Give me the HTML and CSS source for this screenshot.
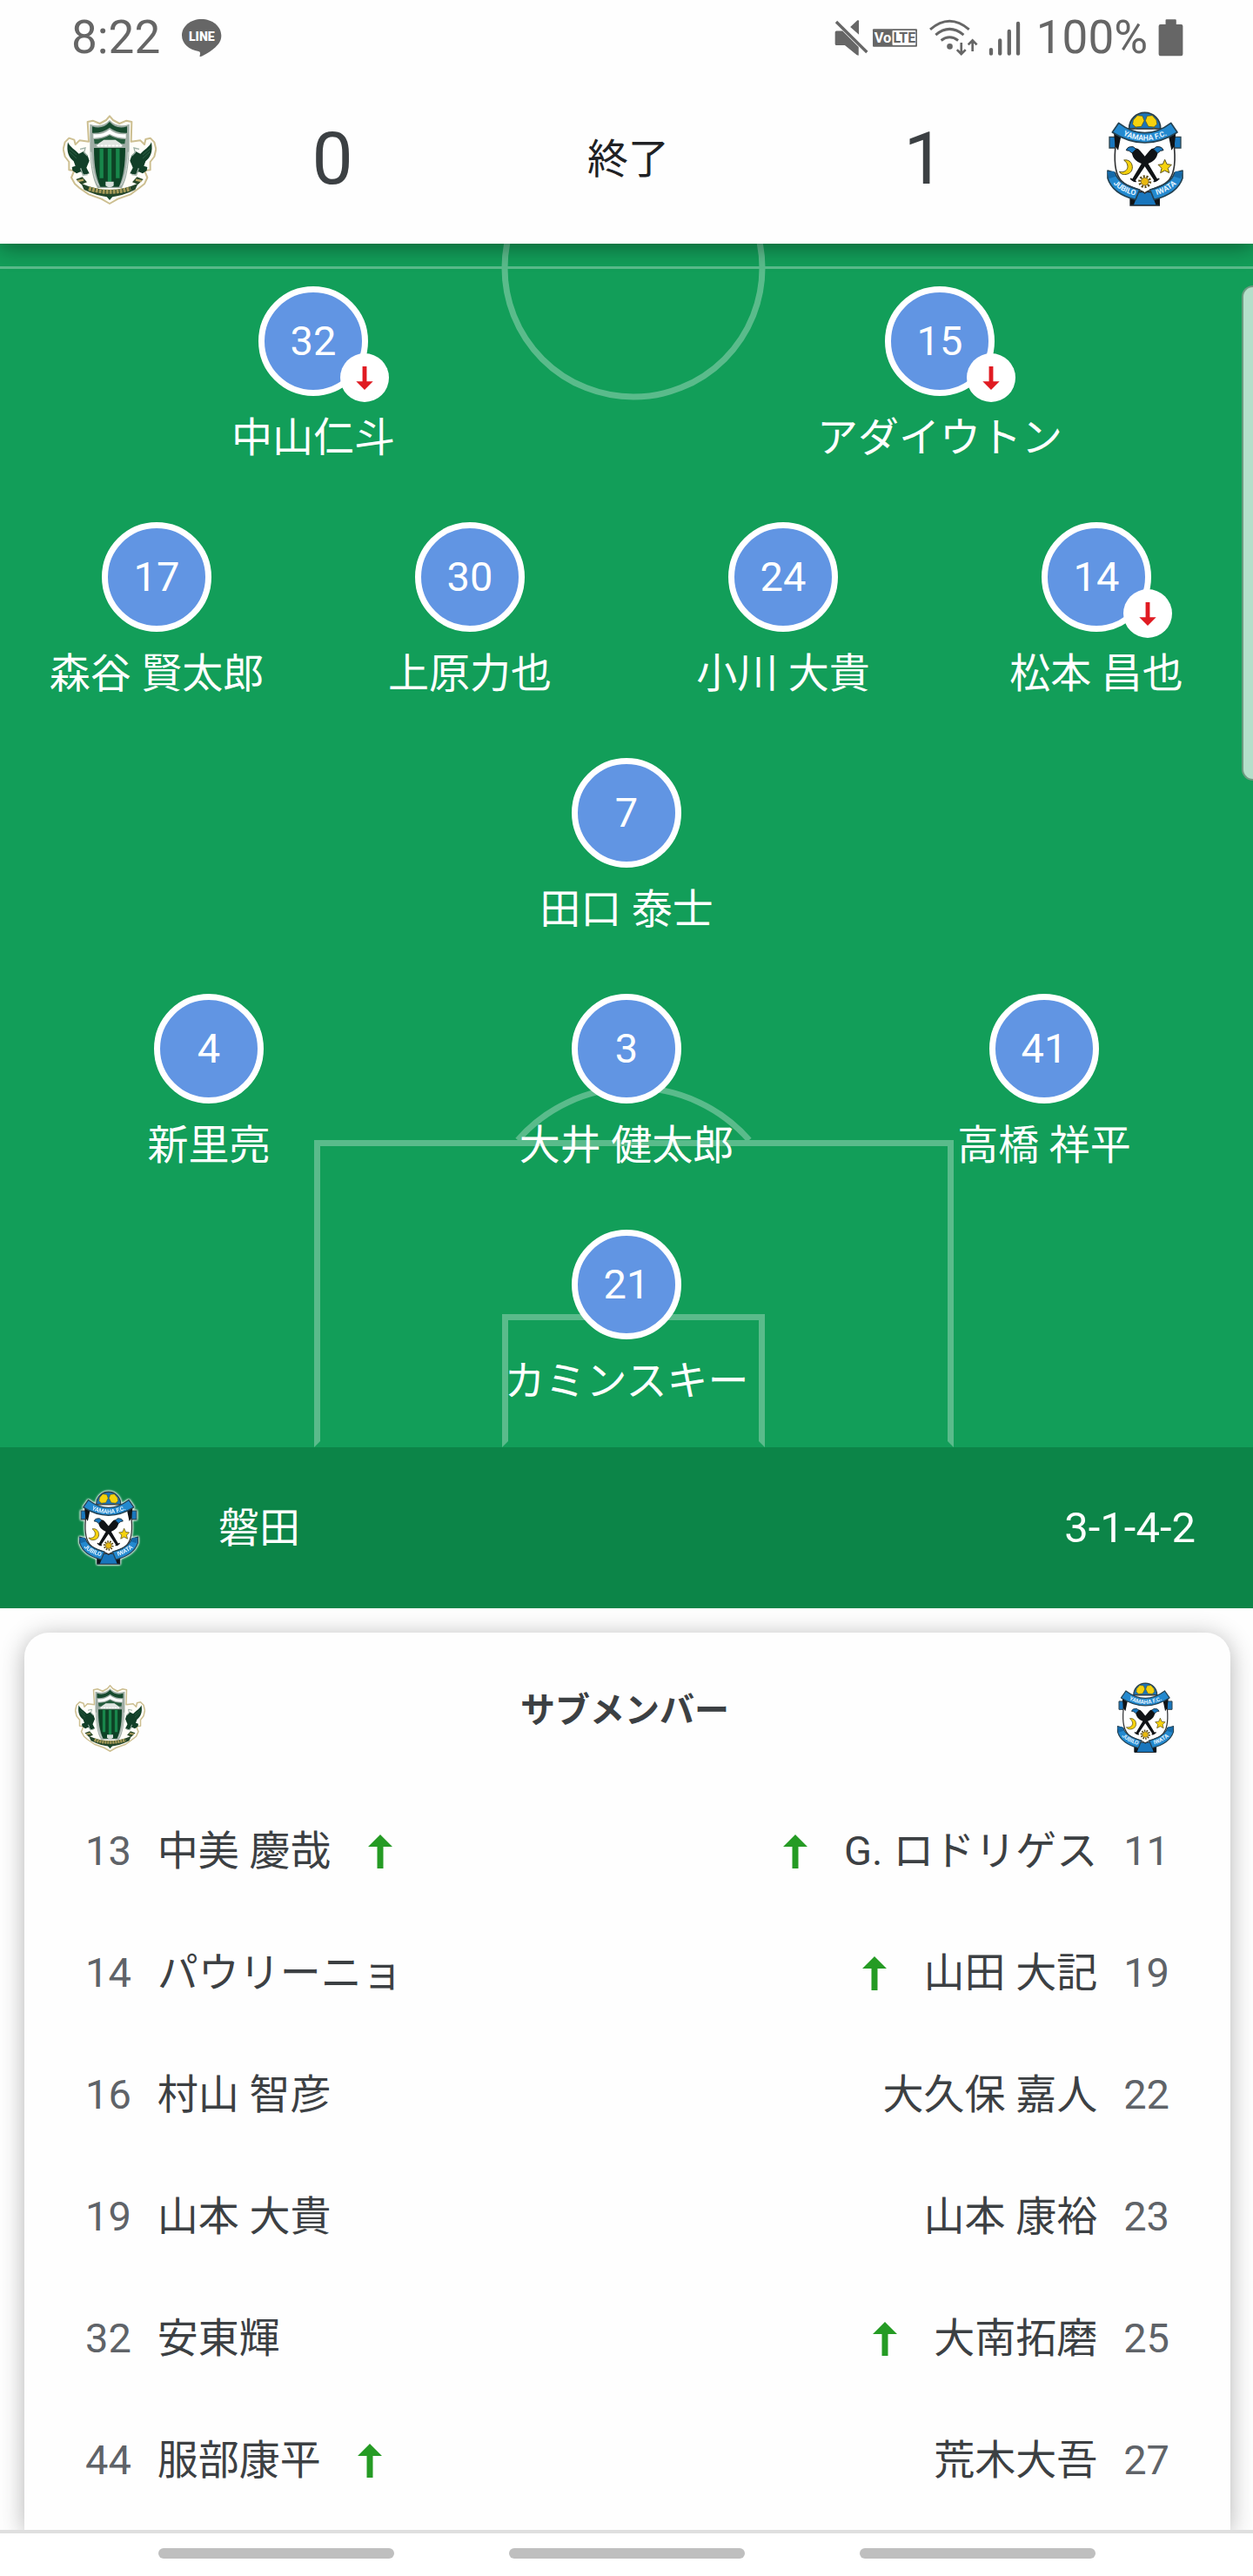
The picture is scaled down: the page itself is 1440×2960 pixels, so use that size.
FILE: index.html
```html
<!DOCTYPE html>
<html lang="ja">
<head>
    <meta charset="UTF-8">
    <meta name="viewport" content="width=device-width, initial-scale=1.0">
    <title>試合 ラインナップ</title>
    <link rel="stylesheet" href="styles.css">
</head>
<body>

<!-- shared icons -->
<svg class="sprite" aria-hidden="true">
    <symbol id="arrow" viewBox="0 0 28 39">
        <path d="M14 0 28 14H17.500V39H10.500V14H0Z" fill="currentColor"/>
    </symbol>

    <symbol id="crest-home" viewBox="36 30 324 310">
        <path d="M198 36 210 50 232 62 256 52 274 56 272 124 304 120 318 134 322 116 338 112 352 126 358 150 352 176 338 194 338 222 318 224 328 248 318 270 300 284 270 306 226 322 198 338 170 322 126 306 94 284 78 270 66 248 76 224 58 222 58 194 44 176 38 150 44 126 58 112 76 118 80 134 94 120 126 124 122 56 140 52 164 62 186 50Z" fill="#fffef8" stroke="#cdbf91" stroke-width="6" stroke-linejoin="round"/>
        <g id="wing">
            <path d="M54 126C60 142 78 152 92 166L108 158 122 172 128 190 118 214 128 234 110 238 98 228 84 234 70 224 68 212 80 208 74 192C58 180 48 160 54 126Z" fill="#123f28"/>
            <path d="M58 148 84 170M60 160 84 182" stroke="#2c6044" stroke-width="3"/>
            <path d="M96 150 114 146 110 162 122 174M98 216 106 240 122 238" stroke="#9db0a5" stroke-width="4" fill="none"/>
            <path d="M82 254 104 246 120 264 100 272Z" fill="#2c4a2a"/>
            <path d="M88 260 108 256" stroke="#b9a766" stroke-width="7"/>
        </g>
        <use href="#wing" transform="matrix(-1 0 0 1 396 0)"/>
        <path d="M130 64Q172 78 198 50 224 78 266 64V150C264 210 256 258 240 284H156C140 258 132 210 130 150Z" fill="#9fada5"/>
        <path d="M138 72Q174 84 198 56 222 84 258 72V94Q224 96 198 76 172 96 138 94Z" fill="#174a2e"/>
        <path d="M142 98Q174 102 198 82 222 102 254 98V112Q224 112 198 98 172 112 142 112Z" fill="#fff"/>
        <path d="M144 116Q176 116 198 102 220 116 252 116L250 132H146Z" fill="#245b3c"/>
        <path d="M158 132 178 118H218L238 132V142H158Z" fill="#dfe5e1"/>
        <path d="M154 138H244" stroke="#fff" stroke-width="5" stroke-dasharray="9 4"/>
        <path d="M144 146H252C252 202 246 246 230 280H166C150 246 144 202 144 146Z" fill="#0d4225"/>
        <path d="M170 148V250M198 148V262M226 148V250" stroke="#18864b" stroke-width="13"/>
        <path d="M134 160C138 214 144 250 160 276M262 160C258 214 252 250 236 276" stroke="#dbe2de" stroke-width="3" fill="none"/>
        <path d="M100 268Q198 312 296 268L286 290Q242 312 198 316 154 312 110 290Z" fill="#24462a"/>
        <path d="M126 286Q198 308 270 286" stroke="#a69a58" stroke-width="15" stroke-dasharray="9 3" fill="none"/>
        <path d="M184 262H212V276Q198 288 184 276Z" fill="#d5ded8"/>
        <path d="M186 312H210L198 326Z" fill="#174a2e"/>
    </symbol>

    <symbol id="crest-away" viewBox="34 22 270 330">
        <circle cx="168" cy="80" r="54" fill="#1c74b8" stroke="#2a3f4a" stroke-width="5"/>
        <g fill="#f6d20d" stroke="#4b4a20" stroke-width="2">
            <path d="M128 52 142 36 160 38 166 54 156 74 136 76 126 66Z"/>
            <path d="M208 52 194 36 176 38 170 54 180 74 200 76 210 66Z"/>
            <path d="M122 82 138 78 150 90 146 108 120 100Z"/>
            <path d="M214 82 198 78 186 90 190 108 216 100Z"/>
        </g>
        <path d="M118 300H218V346H118Z" fill="#1976bd" stroke="#1b2329" stroke-width="4"/>
        <path d="M118 306 142 312 130 344H118ZM218 306 194 312 206 344H218Z" fill="#101316"/>
        <path d="M46 110H74V148H46ZM264 110H292V148H264Z" fill="#1976bd" stroke="#30464f" stroke-width="4"/>
        <path d="M72 82 66 152C62 200 68 244 90 264 112 286 150 288 168 304 186 288 224 286 246 264 268 244 274 200 270 152L264 82Z" fill="#fff" stroke="#303234" stroke-width="5"/>
        <path d="M60 86 88 98 76 156 66 142ZM276 86 248 98 260 156 270 142Z" fill="#101316"/>
        <path d="M78 62Q168 130 258 62L280 94Q168 166 56 94Z" fill="#2389cf" stroke="#254252" stroke-width="5" stroke-linejoin="round"/>
        <path id="arc-top" d="M72 92Q168 152 266 92" fill="none"/>
        <text class="crest-text"><textPath href="#arc-top" startOffset="50%" text-anchor="middle">YAMAHA F.C.</textPath></text>
        <g id="paddle">
            <path d="M124 152Q142 144 152 158L172 182 176 196 214 260 204 266 164 206 144 196Q128 186 124 168Z" fill="#101316"/>
            <path d="M104 156Q108 142 128 144L138 152 124 166 114 158Z" fill="#1976bd" stroke="#17242c" stroke-width="3"/>
            <path d="M198 264 218 254" stroke="#101316" stroke-width="5" fill="none"/>
        </g>
        <use href="#paddle" transform="matrix(-1 0 0 1 336 0)"/>
        <path d="M96 190C128 184 136 230 108 238 96 242 84 238 80 230 108 236 120 208 96 190Z" fill="#f6d20d" stroke="#5d5420" stroke-width="3"/>
        <path d="M237 188 244 204 260 206 248 218 252 234 237 226 222 234 226 218 214 206 230 204Z" fill="#f6d20d" stroke="#5d5420" stroke-width="3"/>
        <circle cx="168" cy="264" r="18" fill="none" stroke="#5d4c14" stroke-width="9" stroke-dasharray="6 5"/>
        <circle cx="168" cy="264" r="13" fill="#e9b90f" stroke="#5d4c14" stroke-width="2"/>
        <path d="M40 226 66 234Q76 272 150 292L136 326Q56 306 40 252Z" fill="#2389cf" stroke="#254252" stroke-width="5" stroke-linejoin="round"/>
        <path d="M298 226 270 234Q260 272 186 292L200 326Q280 306 298 252Z" fill="#2389cf" stroke="#254252" stroke-width="5" stroke-linejoin="round"/>
        <path d="M38 230 62 228 68 246 44 254ZM298 230 274 228 268 246 292 254Z" fill="#1569a8"/>
        <path id="arc-left" d="M52 264Q84 302 144 314" fill="none"/>
        <path id="arc-right" d="M194 314Q250 302 288 262" fill="none"/>
        <text class="crest-text"><textPath href="#arc-left" startOffset="50%" text-anchor="middle">JUBILO</textPath></text>
        <text class="crest-text"><textPath href="#arc-right" startOffset="50%" text-anchor="middle">IWATA</textPath></text>
    </symbol>
</svg>

<header class="top">
    <div class="status-bar">
        <span>8:22</span>
        <svg class="line-icon" viewBox="624 60 140 134">
            <path d="M694 63C657 63 627 87 627 119 627 147 652 168 684 173 690 174 691 178 688 191 690 193 716 182 742 159 756 146 762 135 762 119 762 87 731 63 694 63Z" fill="#666"/>
            <text x="695" y="136" text-anchor="middle" class="line-text">LINE</text>
        </svg>

        <div class="status-right">
            <div class="status-pair">
                <svg class="i-mute" viewBox="118 60 118 130" fill="#666">
                    <path d="M120 106Q120 101 125 101H146L202 157V186L196 185 154 151H125Q120 151 120 146Z"/>
                    <path d="M173 87 198 64Q203 62 203 67V114Z"/>
                    <path d="M124 69 231 175" stroke="#666" stroke-width="10"/>
                </svg>
                <svg class="i-volte" viewBox="250 60 158 130">
                    <rect x="252" y="94" width="154" height="62" rx="3" fill="#666"/>
                    <rect x="320" y="99" width="81" height="52" rx="3" fill="#fff"/>
                    <text x="257" y="142" class="volte-vo">Vo</text>
                    <text x="323" y="143" class="volte-lte">LTE</text>
                </svg>
            </div>
            <svg class="i-wifi" viewBox="444 60 170 130" fill="none" stroke="#666" stroke-width="9">
                <path d="M449 96Q516 38 584 96M468 115Q516 74 565 115M487 134Q516 112 546 134"/>
                <circle cx="517" cy="155" r="10" fill="#666" stroke="none"/>
                <path d="M557 142V180M542 166 557 181 572 166M596 172V134M581 149 596 134 611 149" stroke-width="8"/>
            </svg>
            <svg class="i-signal" viewBox="646 60 112 130" stroke="#666" stroke-width="13" stroke-linecap="round">
                <path d="M655 166V180M686 134V180M718 102V180M749 75V180"/>
            </svg>
            <span>100%</span>
            <svg class="i-battery" viewBox="1232 60 86 130">
                <path d="M1257 64Q1257 61 1260 61H1291Q1294 61 1294 64V78H1311Q1317 78 1317 84V182Q1317 188 1311 188H1239Q1233 188 1233 182V84Q1233 78 1239 78H1257Z" fill="#666"/>
            </svg>
        </div>
    </div>

    <div class="score-bar">
        <svg class="crest crest-home"><use href="#crest-home"/></svg>
        <span class="score">0</span>
        <span class="match-state">終了</span>
        <span class="score">1</span>
        <svg class="crest crest-away"><use href="#crest-away"/></svg>
    </div>
</header>

<main>
    <section class="pitch">
        <!-- pitch markings -->
        <svg class="markings" viewBox="0 0 1440 1383" preserveAspectRatio="xMidYMax slice" aria-hidden="true">
            <path d="M0 26H1440V29H0Z" fill="#fff"/>
            <g fill="none" stroke="#fff" stroke-width="7">
                <circle cx="728" cy="28" r="148"/>
                <path d="M595 1030A177 177 0 0 1 861 1030"/>
            </g>
            <path d="M361 1030H1096V1383L1089 1376V1037H368V1376L361 1383Z" fill="#fff"/>
            <path d="M577 1230H879V1383L872 1376V1237H584V1376L577 1383Z" fill="#fff"/>
        </svg>

        <div class="line">
            <div class="player">
                <div class="shirt">32<span class="sub-off"><svg><use href="#arrow"/></svg></span></div>
                <div class="name">中山仁斗</div>
            </div>
            <div class="player">
                <div class="shirt">15<span class="sub-off"><svg><use href="#arrow"/></svg></span></div>
                <div class="name">アダイウトン</div>
            </div>
        </div>
        <div class="line">
            <div class="player">
                <div class="shirt">17</div>
                <div class="name">森谷 賢太郎</div>
            </div>
            <div class="player">
                <div class="shirt">30</div>
                <div class="name">上原力也</div>
            </div>
            <div class="player">
                <div class="shirt">24</div>
                <div class="name">小川 大貴</div>
            </div>
            <div class="player">
                <div class="shirt">14<span class="sub-off"><svg><use href="#arrow"/></svg></span></div>
                <div class="name">松本 昌也</div>
            </div>
        </div>
        <div class="line">
            <div class="player">
                <div class="shirt">7</div>
                <div class="name">田口 泰士</div>
            </div>
        </div>
        <div class="line">
            <div class="player">
                <div class="shirt">4</div>
                <div class="name">新里亮</div>
            </div>
            <div class="player">
                <div class="shirt">3</div>
                <div class="name">大井 健太郎</div>
            </div>
            <div class="player">
                <div class="shirt">41</div>
                <div class="name">高橋 祥平</div>
            </div>
        </div>
        <div class="line">
            <div class="player">
                <div class="shirt">21</div>
                <div class="name">カミンスキー</div>
            </div>
        </div>
        <div class="edge-handle"></div>
    </section>

    <div class="team-bar">
        <svg class="crest crest-away"><use href="#crest-away"/></svg>
        <span class="team-name">磐田</span>
        <span class="formation">3-1-4-2</span>
    </div>

    <section class="subs">
        <div class="card">
            <div class="card-head">
                <svg class="crest crest-home"><use href="#crest-home"/></svg>
                <h2>サブメンバー</h2>
                <svg class="crest crest-away"><use href="#crest-away"/></svg>
            </div>
            <div class="lists">
                <ul class="list">
                    <li><span class="number">13</span><span>中美 慶哉</span><svg class="sub-on"><use href="#arrow"/></svg></li>
                    <li><span class="number">14</span><span>パウリーニョ</span></li>
                    <li><span class="number">16</span><span>村山 智彦</span></li>
                    <li><span class="number">19</span><span>山本 大貴</span></li>
                    <li><span class="number">32</span><span>安東輝</span></li>
                    <li><span class="number">44</span><span>服部康平</span><svg class="sub-on"><use href="#arrow"/></svg></li>
                </ul>
                <ul class="list away">
                    <li><span class="number">11</span><span>G. ロドリゲス</span><svg class="sub-on"><use href="#arrow"/></svg></li>
                    <li><span class="number">19</span><span>山田 大記</span><svg class="sub-on"><use href="#arrow"/></svg></li>
                    <li><span class="number">22</span><span>大久保 嘉人</span></li>
                    <li><span class="number">23</span><span>山本 康裕</span></li>
                    <li><span class="number">25</span><span>大南拓磨</span><svg class="sub-on"><use href="#arrow"/></svg></li>
                    <li><span class="number">27</span><span>荒木大吾</span></li>
                </ul>
            </div>
        </div>
    </section>
</main>

<nav class="nav-bar">
    <button type="button" aria-label="履歴"></button>
    <button type="button" aria-label="ホーム"></button>
    <button type="button" aria-label="戻る"></button>
</nav>

</body>
</html>
```

FILE: styles.css
```css
* {
    box-sizing: border-box;
}
body {
    margin: 0;
    min-height: 100vh;
    display: flex;
    flex-direction: column;
    background-color: #fefefe;
    color: #3c4043;
    font-family: Roboto, "Noto Sans CJK JP", sans-serif;
    font-size: 47px;
    line-height: 56px;
}
svg {
    display: block;
    flex-shrink: 0;
}
.sprite {
    display: none;
}
.crest-text {
    font-size: 26px;
    font-weight: 700;
    fill: #e4f4ff;
}

/* header */
.top {
    position: relative;
    z-index: 1;
    background-color: #fefefe;
    box-shadow: 0 4px 24px rgba(0, 0, 0, 0.4);
}
.status-bar {
    display: flex;
    align-items: center;
    gap: 24px;
    height: 86px;
    padding: 0 80px 0 82px;
    color: #666;
    font-size: 53px;
}
.status-right {
    display: flex;
    align-items: center;
    gap: 12px;
    margin-left: auto;
}
.status-pair {
    display: flex;
    gap: 4px;
}
.line-icon {
    width: 47px;
    height: 45px;
}
.line-text {
    font-size: 42px;
    font-weight: 900;
    fill: #fff;
}
.volte-vo {
    font-size: 50px;
    font-weight: 700;
    fill: #fff;
}
.volte-lte {
    font-size: 48px;
    font-weight: 700;
    fill: #666;
}
.i-mute {
    width: 39px;
    height: 43px;
}
.i-volte {
    width: 53px;
    height: 43px;
}
.i-wifi {
    width: 57px;
    height: 43px;
}
.i-signal {
    width: 37px;
    height: 43px;
    margin-right: 6px;
}
.i-battery {
    width: 29px;
    height: 43px;
}
.score-bar {
    display: grid;
    grid-template-columns: 252px 260px 1fr 260px 248px;
    align-items: center;
    justify-items: center;
    height: 194px;
}
.score {
    font-size: 84px;
}
.match-state {
    color: #202124;
}
.score-bar .crest-home {
    width: 108px;
    height: 104px;
}
.score-bar .crest-away {
    width: 90px;
    height: 110px;
}

/* pitch */
.pitch {
    position: relative;
    display: flex;
    flex-direction: column;
    gap: 69px;
    padding: 49px 0 48px;
    background-color: #129e59;
    color: #fff;
}
.markings {
    position: absolute;
    top: 0;
    left: 0;
    width: 100%;
    height: 100%;
    opacity: 0.3;
}
.line {
    position: relative;
    display: flex;
}
.player {
    flex: 1;
    display: flex;
    flex-direction: column;
    align-items: center;
    gap: 20px;
}
.shirt {
    position: relative;
    display: flex;
    align-items: center;
    justify-content: center;
    width: 126px;
    height: 126px;
    border: 7px solid #fff;
    border-radius: 50%;
    background-color: #6195e3;
}
.sub-off {
    position: absolute;
    right: -31px;
    bottom: -14px;
    display: flex;
    align-items: center;
    justify-content: center;
    width: 56px;
    height: 56px;
    border-radius: 50%;
    background-color: #fff;
    color: #e01b22;
}
.sub-off svg {
    width: 20px;
    height: 27px;
    transform: rotate(180deg);
}
.name {
    white-space: nowrap;
}
.edge-handle {
    position: absolute;
    top: 48px;
    right: 0;
    width: 13px;
    height: 569px;
    border: 2px solid #6b9a80;
    border-right: 0;
    border-radius: 14px 0 0 14px;
    background-color: #b4dfca;
}
.team-bar {
    display: flex;
    align-items: center;
    height: 185px;
    padding: 0 66px 0 90px;
    background-color: #0c8548;
    color: #fff;
}
.team-bar .crest {
    width: 70px;
    height: 86px;
    filter: drop-shadow(0 0 1px #fff) drop-shadow(0 0 1px #fff);
}
.team-name {
    margin-left: 91px;
}
.formation {
    margin-left: auto;
    font-size: 49px;
}

/* substitutes */
main {
    flex: 1;
    display: flex;
    flex-direction: column;
}
.subs {
    flex: 1;
    display: flex;
    padding: 28px 26px 0 28px;
    overflow: hidden;
}
.card {
    flex: 1;
    padding: 0 70px 10px;
    border-radius: 28px 28px 0 0;
    background-color: #fefefe;
    box-shadow: 0 4px 28px rgba(0, 0, 0, 0.3);
}
.card-head {
    display: grid;
    grid-template-columns: 1fr auto 1fr;
    align-items: center;
    height: 181px;
    padding-top: 14px;
    margin: 0 -6px 0 -12px;
}
.card-head h2 {
    margin: 0 0 16px;
    font-size: 40px;
    font-weight: 700;
}
.card-head .crest-home {
    width: 81px;
    height: 78px;
}
.card-head .crest-away {
    justify-self: end;
    width: 67px;
    height: 82px;
}
.lists {
    display: flex;
    justify-content: space-between;
}
.list {
    margin: 0;
    padding: 0;
    list-style: none;
}
.list li {
    display: flex;
    align-items: center;
    gap: 30px;
    height: 140px;
    white-space: nowrap;
}
.away li {
    flex-direction: row-reverse;
}
.number {
    color: #5f6368;
}
.sub-on {
    width: 28px;
    height: 39px;
    margin: 0 12px;
    color: #259b24;
}

/* system navigation */
.nav-bar {
    display: flex;
    justify-content: center;
    gap: 132px;
    height: 53px;
    padding-top: 17px;
    border-top: 4px solid #dfdfdf;
    background-color: #fff;
}
.nav-bar button {
    width: 271px;
    height: 12px;
    padding: 0;
    border: none;
    border-radius: 6px;
    background-color: #bfbfbf;
    cursor: pointer;
}
```
